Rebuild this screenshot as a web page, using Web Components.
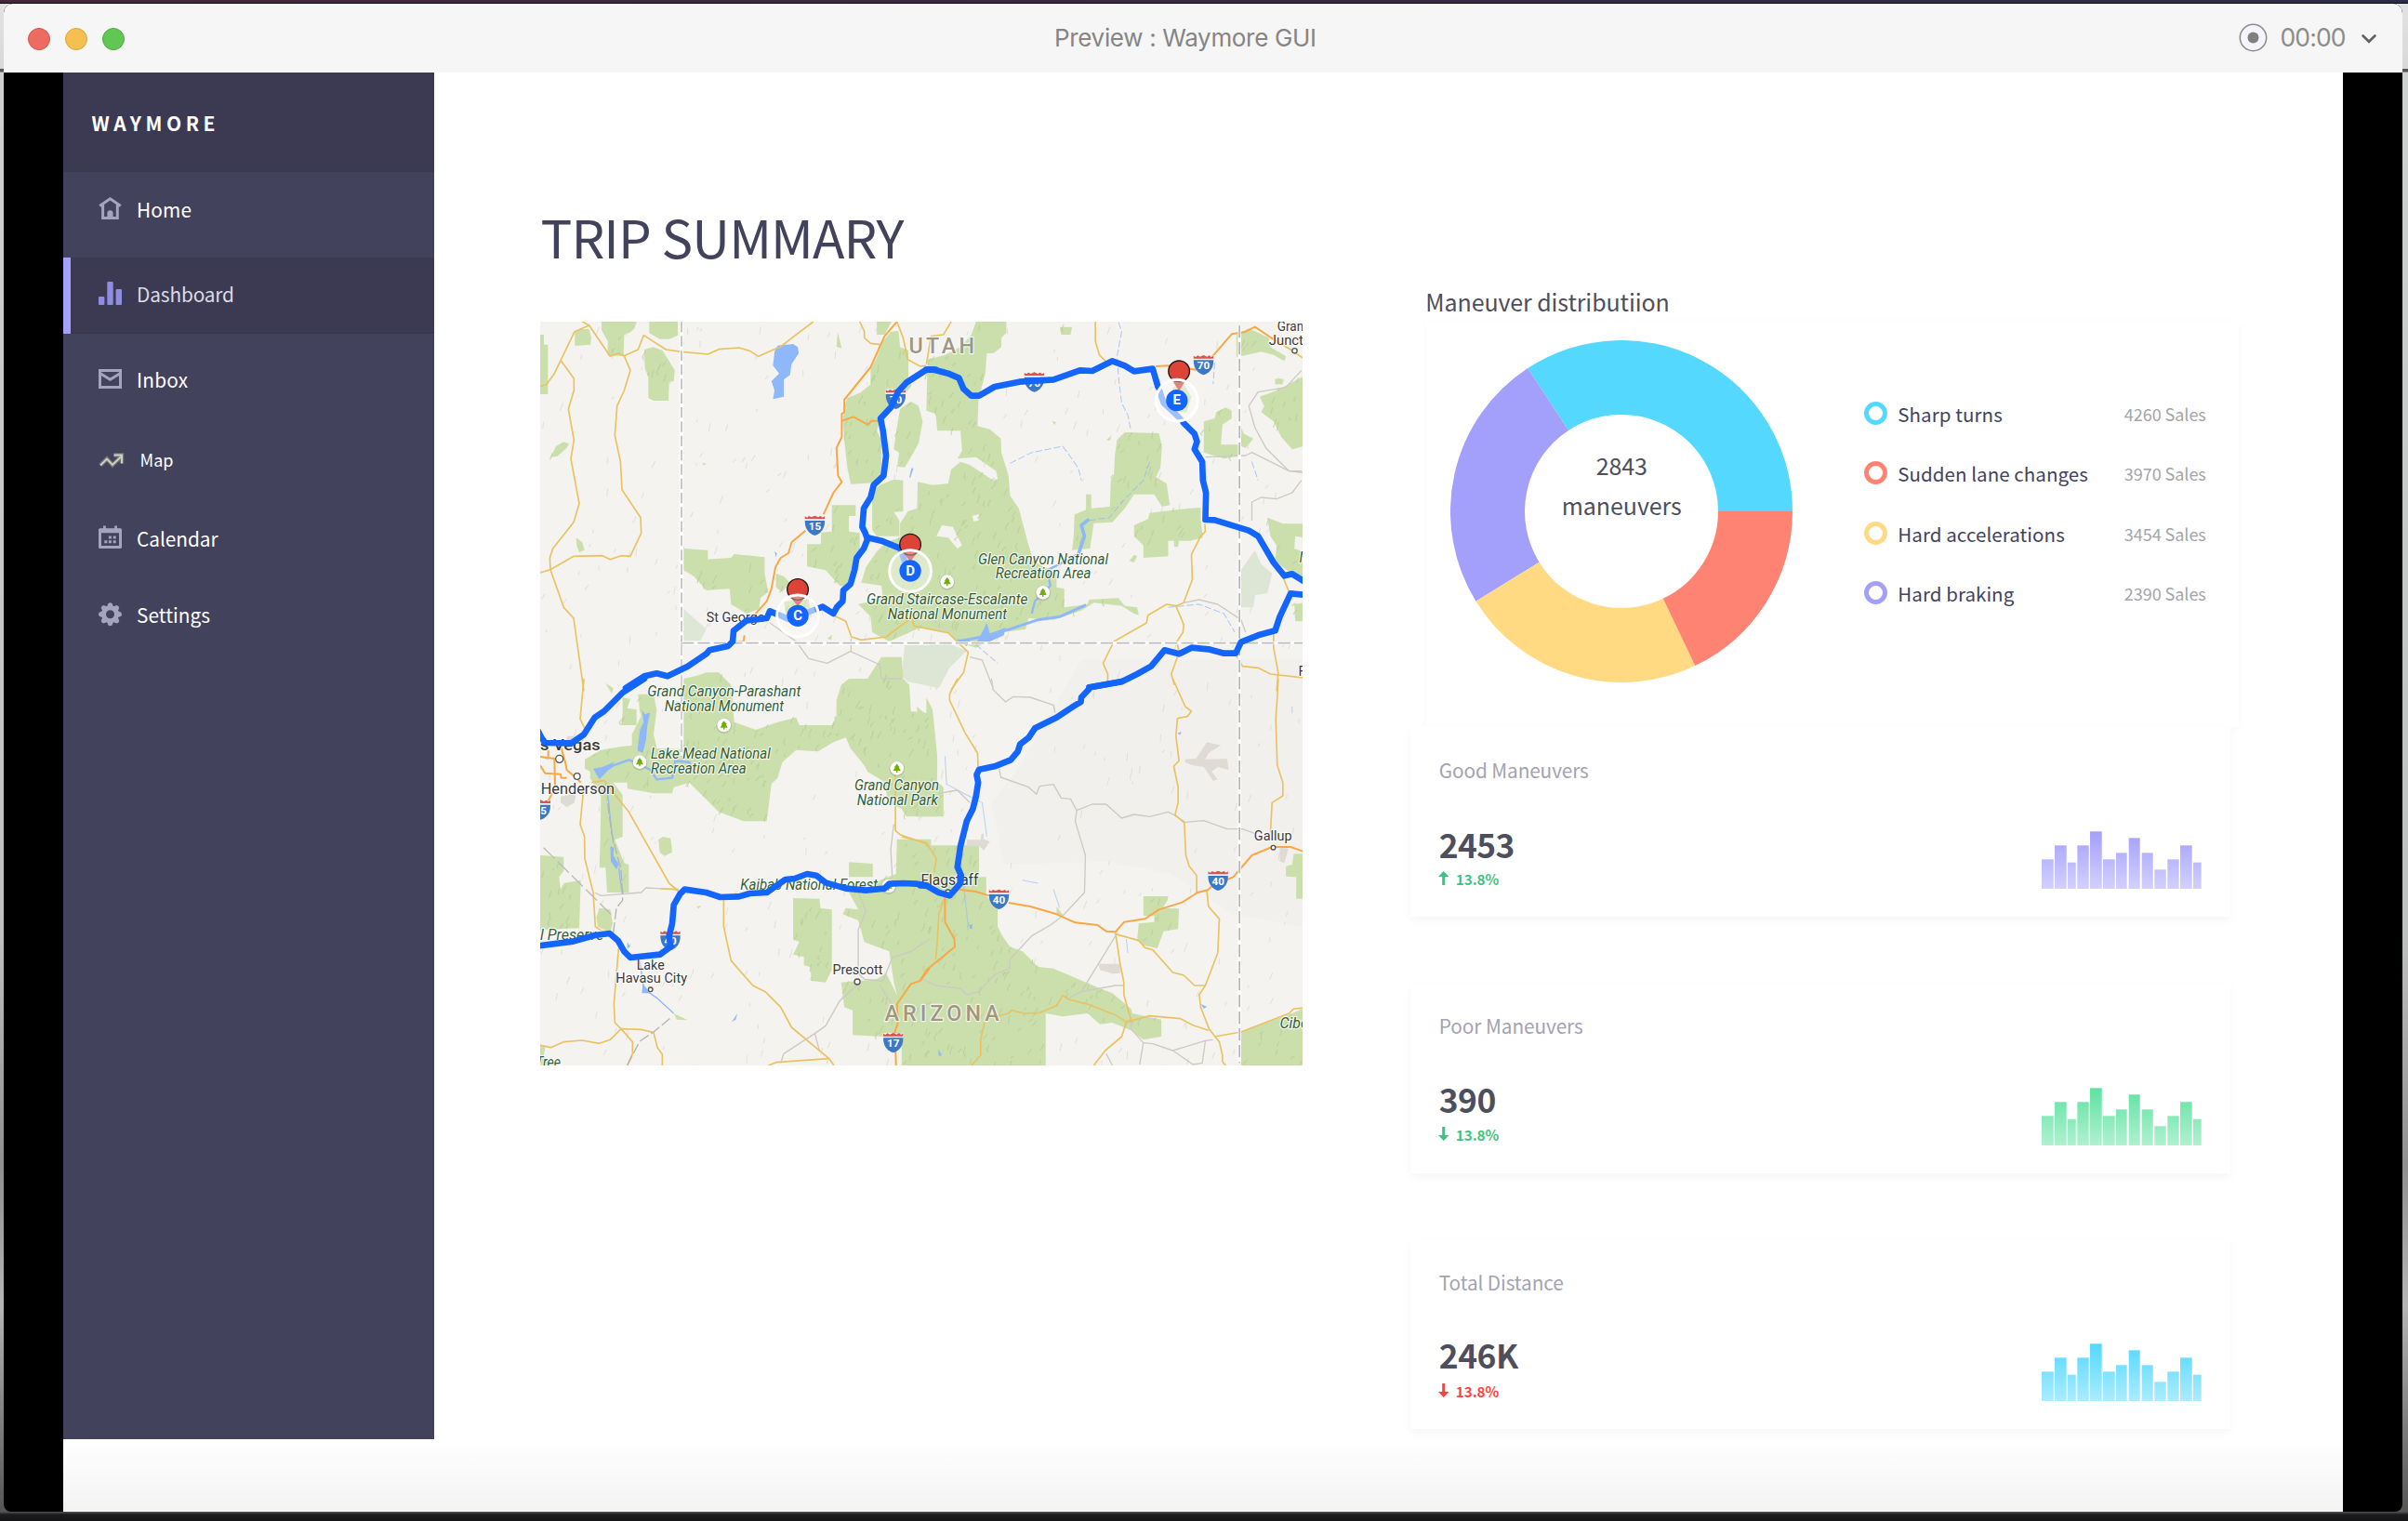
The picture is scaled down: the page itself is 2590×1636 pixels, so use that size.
<!DOCTYPE html>
<html lang="en">
<head>
<meta charset="utf-8">
<title>Waymore GUI</title>
<style>
html,body{margin:0;padding:0;width:2590px;height:1636px;overflow:hidden;background:#17161a}
body{font-family:"Noto Sans CJK SC","Source Sans Pro","Open Sans",sans-serif}
</style>
</head>
<body>
<way-desktop></way-desktop>
<script>
const define=(name,html,init)=>customElements.define(name,class extends HTMLElement{
  connectedCallback(){
    if(this.shadowRoot)return;
    const root=this.attachShadow({mode:'open'});
    root.innerHTML=typeof html==='function'?html(this):html;
    if(init)init(this,root);
  }
});
const a=(el,n,d='')=>el.getAttribute(n)??d;

/* Single-line label whose tracking is set so that the line is "w" pixels wide. */
define('way-text',el=>`<style>
:host{display:block;white-space:nowrap;font-size:${a(el,'size',20)}px;line-height:30px;height:30px;color:${a(el,'color','#43425d')};font-weight:${a(el,'weight',400)}}
span{display:inline-block;line-height:30px;white-space:nowrap}
</style><span>${el.getAttribute('text')}</span>`,(el,root)=>{
  const w=+a(el,'w',0),s=root.querySelector('span');
  if(w){const n=el.getAttribute('text').length-1;
    const d=(w-s.getBoundingClientRect().width)/n;
    s.style.letterSpacing=d.toFixed(3)+'px';s.style.marginRight=(-d).toFixed(3)+'px';}
});

define('way-titlebar',`<style>
:host{display:flex;height:74px;background:#f6f6f6;border-radius:10px 10px 0 0;align-items:flex-start;justify-content:space-between;font-family:Inter,"Liberation Sans",sans-serif;box-shadow:inset 0 1px 0 #fff}
.side{display:flex;width:360px}
.lights{display:flex;gap:16px;padding:26px 0 0 26px}
.lights i{display:block;box-sizing:border-box;width:24px;height:24px;border-radius:50%}
.t{padding-top:21.5px;margin-left:2px}
.side.rec{justify-content:flex-end;width:400px}
.rec svg{display:block}
.rec way-text{margin:21px 16px 0 14px}
</style>
<div class="side"><div class="lights"><i style="background:#ed6b60;border:1px solid #d8544b"></i><i style="background:#f5c04f;border:1px solid #d9a33e"></i><i style="background:#62c655;border:1px solid #4eaa41"></i></div></div>
<div class="t"><way-text text="Preview : Waymore GUI" size="26" w="282" color="#858585"></way-text></div>
<div class="side rec">
<svg width="31" height="31" viewBox="0 0 31 31" style="margin-top:20.5px"><circle cx="15.5" cy="15.5" r="14.2" fill="#f5f4fa" stroke="#8c8c8c" stroke-width="1.6"/><circle cx="15.5" cy="15.5" r="6" fill="#7f7f7f"/></svg>
<way-text text="00:00" size="26.5" w="71" color="#8c8c8c"></way-text>
<svg width="16" height="10" viewBox="0 0 16 10" style="margin:33px 28.5px 0 0"><path d="M1.6 1.5 8 7.8 14.4 1.5" fill="none" stroke="#636363" stroke-width="2.7" stroke-linecap="round"/></svg>
</div>`);

const ICONS={
home:`<path d="M1.2 9.4 12.5 1.7 23.8 9.4M4.6 7.5V22.4H20.3V7.5" fill="none" stroke="#a5a4bf" stroke-width="3" stroke-linejoin="miter"/><path d="M9.4 24V17.3a3.1 3.1 0 0 1 6.2 0V24z" fill="#a5a4bf"/>`,
bars:`<g fill="#8f8ddf"><rect x="0" y="16" width="6.4" height="9" rx="1"/><rect x="9.3" y="0" width="6.4" height="25" rx="1"/><rect x="18.6" y="8" width="6.4" height="17" rx="1"/></g>`,
inbox:`<g transform="translate(0 2)"><path d="M1.5 1.5h22v18h-22zM2 4.7 12.5 11.2 23 4.7" fill="none" stroke="#a5a4bf" stroke-width="3"/></g>`,
map:`<g fill="none" transform="translate(1 6.5)"><path d="M1 13 8 6l6 6.5L24 3M15.5 2H24v9" stroke="#77756f" stroke-width="4.4"/><path d="M1 13 8 6l6 6.5L24 3M15.5 2H24v9" stroke="#cfcecb" stroke-width="1.9"/></g>`,
cal:`<g transform="translate(0 -.7)"><path d="M1.5 4.5h22v18.7h-22z" fill="none" stroke="#a5a4bf" stroke-width="3" stroke-linejoin="round"/><path d="M1 3.5h23v4.4H1zM5 .3h2.8v4H5zM17.2.3H20v4h-2.8zM10.9 11.3h3v3h-3zM15.7 11.3h3v3h-3zM6.3 16h3v3h-3zM10.9 16h3v3h-3zM15.7 16h3v3h-3z" fill="#a5a4bf"/></g>`,
gear:`<g transform="translate(12.5 12.7)"><g fill="#a5a4bf">${[0,45,90,135,180,225,270,315].map(r=>`<path transform="rotate(${r})" d="M-3.6-8-2-11.8Q0-13.2 2-11.8L3.6-8z"/>`).join('')}</g><circle r="6.9" fill="none" stroke="#a5a4bf" stroke-width="4.8"/></g>`
};
define('way-nav-item',el=>`<style>
:host{display:flex;align-items:flex-start;box-sizing:border-box;height:${a(el,'h')}px;padding:${a(el,'pt','25')}px 0 0 38px}
:host([active]){background:#3c3a52;border-left:8px solid #a3a1fb;padding-left:30px;margin-bottom:9px;box-shadow:inset 0 -1px #373550}
svg{display:block;overflow:visible;margin-top:2px;flex:none}
way-text{margin:-.5px 0 0 ${a(el,'gap','16')}px}
</style><svg width="25" height="25" viewBox="0 0 25 25">${ICONS[a(el,'icon')]}</svg><way-text text="${a(el,'label')}" size="${a(el,'size','20.8')}" w="${a(el,'w')}" color="${a(el,'color','#fff')}"></way-text>`);

define('way-sidebar',`<style>
:host{display:flex;flex-direction:column;width:398.7px;height:1470px;background:#43425d;flex:none}
header{height:107px;background:#3c3a52;box-sizing:border-box;padding:39px 0 0 30.5px}
</style>
<header><way-text text="WAYMORE" size="21" weight="700" w="133" color="#fff"></way-text></header>
<way-nav-item icon="home" label="Home" h="92" w="59"></way-nav-item>
<way-nav-item active icon="bars" label="Dashboard" h="82" pt="24" w="105" color="#dddce2"></way-nav-item>
<way-nav-item icon="inbox" label="Inbox" h="86" w="55"></way-nav-item>
<way-nav-item icon="map" label="Map" h="85" size="18" gap="19.5" w="36"></way-nav-item>
<way-nav-item icon="cal" label="Calendar" h="82" w="87.5"></way-nav-item>
<way-nav-item icon="gear" label="Settings" h="82" w="79"></way-nav-item>`);

/* ---------- map ---------- */
const P=(d,f='#cbdfac')=>d.split('|').map(p=>`<polygon points="${p.trim()}" fill="${f}"/>`).join('');
const L=(d,c,w,x='')=>d.split('|').map(p=>`<polyline points="${p.trim()}" stroke="${c}" stroke-width="${w}" fill="none" stroke-linejoin="round" ${x}/>`).join('');
const Y='#e9c262',O='#f8a845',G='#cdc9c3',W='#8fb8fb',B='#1365fe';
const Q=[[0,0],[1290,0],[0,1200],[1290,1200]].map(q=>s=>`<g transform="translate(${q})">${s}</g>`);
const parks=
Q[0](P(`64,90 76,90 76,122 89,122 89,282 64,282|176,78 195,72 222,72 229,100 226,122 176,126|262,48 376,48 368,70 355,82 335,90 333,158 282,158 282,110 262,75|416,48 508,48 508,92 480,104 450,104 416,85|400,138 428,130 458,140 478,172 498,205 495,240 480,242 478,303 430,303 413,295 413,225 402,200|98,485 115,450 140,436 157,442 150,455 120,482|1150,48 1198,48 1175,90 1150,90|1020,128 1024,82 1037,134|1170,110 1195,80 1220,78 1225,130 1252,140 1252,230 1262,255 1200,330 1160,370 1150,400 1165,430 1165,540 1140,568 1066,572 1055,520 1045,430 1040,370 1045,330 1055,295 1100,275 1130,250 1130,200 1150,165|1213,400 1225,330 1260,305 1285,320 1298,370 1285,440 1260,485 1240,518 1216,515 1222,470 1205,460|1135,600 1160,575 1205,557 1235,560 1235,660 1205,662 1223,690 1223,740 1150,740 1135,720|1005,640 1082,640 1082,675 1060,675 1060,725 1095,730 1095,780 1075,830 1060,905 1030,900 985,850 925,838 925,766 970,766 970,728 1005,725|527,780 605,785 605,815 680,810 690,798 788,808 788,860 800,920 775,940 770,975 730,990 680,960 675,910 600,915 560,870 527,850|825,860 850,870 870,890 845,920 825,905|180,745 200,760 207,785 190,792 182,770|850,950 930,945 940,1000 860,1010|585,503 600,506 593,512|990,1070 1005,1058 1003,1076`))+
Q[1](P(`180,48 278,48 278,85 262,100 262,130 236,150 215,150 210,215 188,300 185,385 225,395 260,425 262,470 285,545 290,610 318,650 350,770 365,820 440,860 440,905 465,910 465,970 540,960 545,945 640,940 660,965 700,970 705,995 690,990 650,965 560,955 520,980 430,1010 350,1005 340,1040 270,1050 180,1100 120,1080 90,1050 0,1035 -100,1080 -155,1050 -160,1000 -200,960 -120,940 -125,900 -190,890 -175,840 -140,790 -110,760 -65,745 -65,700 -40,660 -10,650 -8,565 40,575 90,570 100,525 130,500 160,510 235,560 250,555 245,530 180,485 120,490 135,465 130,400 55,400 50,345 20,335 22,250 24,170 80,155 130,130 165,90|450,65 490,65 485,90 455,90|635,430 660,405 770,408 780,450 775,520 760,550 795,570 805,640 780,645 755,605 690,605 660,650 620,695 560,698 548,780 520,782 490,785 495,740 498,670 535,655 535,605 552,605 552,650 612,645 615,560 625,540 628,480|915,370 950,360 955,340 985,325 1005,335 1005,360 975,380 970,445 1030,445 1030,480 980,490 915,470|1035,390 1045,410 1075,425 1050,455 1035,450|690,705 735,685 740,665 870,650 905,648 905,690 912,745 870,755 835,755 832,775 820,775 818,755 800,755 800,805 720,810 720,770 690,740|675,820 690,800 700,805 690,825|1020,90 1060,70 1125,100 1130,130 1180,160 1175,175 1140,155 1100,145 1020,163|1145,232 1170,232 1170,250 1145,250|1095,290 1150,270 1235,225 1235,450 1200,460 1165,420 1140,370 1100,340 1110,320|1120,680 1170,700 1235,700 1235,745 1210,740 1207,780 1235,790 1235,870 1190,855 1145,820 1150,770 1130,740|1207,960 1235,955 1235,1015 1210,1015|600,430 618,415 612,432|425,368 438,372 434,382|815,260 850,250 875,290 860,340 820,340`))+
Q[2](P(`1120,0 1165,-70 1230,-70 1235,0 1255,20 1260,105 1310,110 1310,60 1330,100 1345,250 1345,445 1245,445 1230,420 1190,400 1170,330 1120,300 1110,280 1065,225 1050,190 1010,205 960,235 890,230 845,270 830,320 810,340 795,460 720,460 640,430 610,400 545,335 495,350 490,370 430,370 345,355 345,335 300,335 330,375 330,510 305,520 335,595 350,600 350,690 280,690 275,610 255,610 258,520 260,380 225,320 225,300 208,290 208,260 260,230 320,220 360,215 360,180 390,120 385,105 380,50 430,50 440,100 430,180 440,225 527,228 527,0 570,-10 600,-20 640,-20 680,20 690,140 760,165 830,140 890,125 900,150 1005,150 1020,120 1020,70 1035,20 1060,0|325,150 330,110 330,60 355,65 345,95 375,100 375,150|275,15 300,30 295,48|64,570 140,575 140,620 125,640 130,680 140,660 195,650 190,805 64,810|255,740 290,745 298,790 290,820 250,800 245,770|445,520 460,510 485,515 490,560 465,572 450,560|880,708 965,710 968,740 1005,745 1005,940 985,980 940,975 935,930 915,925 915,898 880,890 900,850 880,840|64,1180 80,1190 75,1220 110,1248 64,1248|495,1080 540,1102 505,1100|568,735 585,732 575,742`))+
Q[3](P(`-75,518 35,518 35,538 190,538 190,640 213,640 213,700 250,745 250,800 265,830 290,865 330,880 380,930 430,935 500,965 570,995 620,1015 680,1065 685,1080 778,1100 778,1155 720,1165 680,1135 620,1110 580,1115 540,1080 460,1090 405,1080 405,1248 -60,1248 -60,1160 -120,1155 -218,1150 -218,1070 -245,1060 -255,980 -140,970 -110,950 -75,1020 -85,980 -100,880 -180,850 -200,780 -250,760 -240,740 -200,745 -230,690 -78,630|-230,592 -153,597 -153,640 -230,640|720,702 800,702 798,715 782,740 835,742 832,808 785,815 765,870 720,860 700,840 705,790 755,785 755,765 720,765|1180,605 1200,600 1205,565 1235,565 1235,710 1213,710 1213,640 1180,638|1035,1140 1200,1080 1235,1065 1235,1248 1035,1248|440,735 462,765 440,760|0,100 25,120 20,200 50,240 50,330 75,350 75,445 -10,445 -10,90`));
/* relief strokes scattered over the terrain */
let seed=7;const rnd=()=>(seed=(seed*16807)%2147483647)/2147483647;
let relief='',relief2='';
for(let i=0;i<2600;i++){const x=64+rnd()*2460|0,y=48+rnd()*2400|0,l=6+rnd()*14|0,k=rnd()*10-12|0;relief+=`M${x} ${y}l${k} ${l}l${rnd()*12-6|0} ${l/2|0}`;}
for(let i=0;i<520;i++){const x=64+rnd()*2460|0,y=48+rnd()*2400|0,l=8+rnd()*20|0;relief2+=`M${x} ${y}l${-(rnd()*12|0)} ${l}`;}
const shield=(x,y,t)=>`<g transform="translate(${x} ${y})"><path d="M-34-16V-30Q-20-34 0-30T34-30V-16z" fill="#f4f2ee"/><path d="M-32-20v-9l7 4 6-5 8 4 11-5 11 5 8-4 6 5 7-4v9z" fill="#d9534f"/><path d="M-32-15H32Q33 10 17 24 8 31 0 33-8 31-17 24-33 10-32-15z" fill="#3b78c5"/><text y="15" font-size="35" font-weight="700" fill="#fff" text-anchor="middle">${t}</text></g>`;
const tree=(x,y)=>`<g transform="translate(${x} ${y})"><circle r="25" fill="#8a8a80" opacity=".35" cy="2"/><circle r="22" fill="#fff"/><path d="M0-14 9-3H6L12 8H2v6h-4V8h-10l6-11h-3z" fill="#71ad0b"/></g>`;
const town=(x,y,r=9)=>`<circle cx="${x}" cy="${y}" r="${r}" fill="#fff" stroke="#555" stroke-width="4"/>`;
const T=(x,y,t,w,s=45,c='#3a3a3a',e='')=>`<text x="${x}" y="${y-2}" textLength="${w}" lengthAdjust="spacingAndGlyphs" font-size="${s}" fill="${c}" ${e}>${t}</text>`;
const I=(x,y,t,w,s=47)=>T(x,y,t,w,s,'#336039','font-style="italic"');
const pin=(x,y,px,py,t)=>`<g><path d="M${px-26} ${py+22}L${px} ${y-30}L${px+26} ${py+22}z" fill="#cf4034"/><circle cx="${px}" cy="${py}" r="34" fill="#db4437" stroke="#231815" stroke-width="4"/><circle cx="${x}" cy="${y}" r="67" fill="#fff" fill-opacity=".36" stroke="#fff" stroke-width="9"/><circle cx="${x}" cy="${y}" r="35" fill="${B}"/><text x="${x}" y="${y+14}" font-size="45" font-weight="700" fill="#fff" text-anchor="middle">${t}</text></g>`;
const RT='stroke-linecap="round"';
const mapSvg=`<svg width="820.5" height="800" viewBox="64 48 2461 2400" preserveAspectRatio="none" font-family="Roboto,'Liberation Sans',sans-serif">
<rect x="64" y="48" width="2461" height="2400" fill="#f4f3ef"/>
<path d="M1810 1140H2524V2000L2300 1960 2100 1830 1900 1790 1560 1800 1520 1600 1600 1500z" fill="#f2f0ec"/>
<path d="${relief2}" stroke="#dddbd6" stroke-width="3" fill="none" opacity=".8"/>
${Q[0](P('527,975 600,1040 580,1078 527,1078','#dde7d5'))}
${Q[1](P('1035,850 1080,785 1100,830 1135,860 1120,925 1080,930 1075,970 1035,970|-50,1090 100,1090 150,1110 95,1165 60,1230 -40,1210 -60,1190','#dde5d4'))}
${parks}
${Q[1](P('52,740 70,705 105,710 135,770 120,780 90,745|168,675 190,670 188,690 172,692','#f4f3ef'))}
<g id="relief"></g>
${Q[3](P('150,520 195,520 198,500 205,500 205,518 225,525 205,555 190,540 150,540|855,260 890,258 925,205 970,215 930,240 920,260 990,258 995,295 960,285 940,300 960,325 945,330 915,285 880,280 855,270|575,920 645,920 645,950 620,952 580,940|1160,545 1188,548 1175,595 1160,590','#dfdad4'))}
${Q[2](P('150,185 205,185 200,215 150,215|130,380 180,370 175,400 150,415 130,400','#dcdcd2'))}
${Q[0](P('830,125 880,120 895,130 898,150 875,185 870,220 850,235 850,290 815,298 820,270 810,240 835,215 815,190 820,145|1255,550 1262,520 1268,522 1258,552|820,790 828,795 825,808',W))}
${Q[1](L('640,50 650,80 635,160 640,230 650,310 670,350 680,400|290,505 360,470 460,450 510,520 520,560|740,500 720,560 660,620 610,680 540,690|950,180 945,250|1070,500 1090,560|800,970 900,960 980,990 1015,1050|180,1090 250,1150',W,3,'stroke-dasharray="22 8" opacity=".75"')+L('545,685 520,705 530,740 510,800 490,810',W,11)+L('470,820 410,850 420,900 370,950 360,990',W,7)+L('120,1080 200,1065 290,1040 380,1010 450,1000 535,962',W,9)+P('195,1060 215,1020 225,1055 275,1035 270,1060 225,1080 180,1085|118,1072 160,1078 150,1095',W))}
${Q[2](P('392,100 402,115 418,110 410,150 405,200 395,240 378,232 385,170 398,140|235,290 265,285 305,268 270,310 255,325|290,540 302,545 300,570 318,600 310,615 292,590|395,985 420,1015 392,1015|682,1108 700,1080 695,1100|345,850 355,865 345,870',W)+L('270,300 300,280 350,262 385,275 420,295 440,325 490,320 500,265 545,270 560,300',W,7)+L('275,330 285,400 292,470 300,530|318,610 322,650 332,695|385,910 398,1000 440,1030 495,1080',W,4))}
${Q[3](L('130,580 155,800|80,250 85,340 150,375 200,400 215,510|330,650 380,660|430,680 450,740|665,840 670,885|1200,90 1200,112',W,3,'opacity=".6"')+P('158,795 168,792 168,808 160,806|905,1050 925,1058 915,1065|58,1195 70,1215 60,1218|830,175 843,172 838,182',W))}
${Q[0](L('890,1080 930,1135 990,1150 1065,1112 1160,1155 1165,1200 1230,1200|1067,1070 1067,1112|805,1020 890,1080',G,4))}
${Q[1](L('920,485 1050,480 1070,470 1190,530 1230,530|1230,205 1180,260 1090,275 1060,320 1080,390 1115,455 1190,530 1235,535|1070,690 1070,630 1100,615 1150,620 1200,600 1230,560|850,955 900,945 960,960 1035,1010 1050,1050|160,1130 200,1140 235,1230',G,4))}
${Q[2](L('240,690 260,700 390,690 405,675 500,680|64,250 90,260|1205,470 1195,550 1200,640|1090,690 1115,750 1090,810 1090,950 1110,970|1090,985 1030,1040 985,1120 950,1145 850,1210 840,1240|950,1145 965,1200|1110,970 1170,975 1200,900 1260,880 1320,840|1160,990 1200,1050',G,4))}
${Q[3](L('230,0 235,35 275,75 300,58 355,60 430,85 435,110|255,290 260,318 350,350 375,373 385,347 430,341 455,385 485,388 505,425 555,405 600,405 650,450 690,438 740,445 800,430 820,440 855,463 915,458 990,485 1040,485 1080,500|505,425 500,460 533,570 530,690 460,765 420,795 360,830 290,905 288,935 240,955 190,1010 150,1020 130,1000 50,990 0,965|630,830 520,1010 480,1030|520,1010 630,990 655,990|680,1100 680,1130 720,1175 750,1178 815,1200 920,1168 945,1165|720,1175 708,1245|815,1200 880,1245 910,1240 920,1168|600,1210 620,1248|60,370 120,360 160,400',G,4))}
${Q[0](L('64,258 85,250 110,215 175,80 222,60 290,160 315,150 335,158 380,138 398,92 470,138 520,145 605,153 640,137 705,132 740,142 768,160 840,128 945,48|200,48 222,60|132,175 173,232 173,270 155,330 173,430 163,490 190,635 172,695 105,780 95,810 97,848 140,970 172,1005 205,1240|335,158 355,205 335,270 312,320 305,415 323,500 328,590 388,680 390,730 355,805 325,803 290,815 265,803 172,805 97,848 64,858|1095,48 1110,80 1110,100 1130,118 1163,122|1215,48 1235,100 1250,170 1290,192 1310,190|1010,995 1050,1015 1068,1065 1100,1075 1180,1065 1260,1005',Y,5))}
${Q[1](L('100,48 75,90 35,95 20,185|565,48 565,110 578,155 600,178|918,700 920,725 905,740 875,800 878,880 850,955 825,965 795,960 735,995 730,1020 625,1080 590,1150 605,1185 605,1215|825,965 850,1025 848,1050 828,1080 835,1115 810,1185 820,1220|1165,860 1190,920|1140,1050 1140,1100 1155,1180 1150,1240|1020,1125 1040,1160 1090,1165 1130,1185 1235,1197|-25,1005 -20,1030 90,1052 155,1115 140,1180 100,1235|1130,100 1190,135 1235,165',Y,5))}
${Q[2](L('205,0 193,130 210,165|205,345 193,470 207,510 208,580 235,690 242,800 285,830|230,335 270,328 310,380 350,430 480,660 515,690|453,678 510,680|656,715 656,800 680,910 750,990 790,1010 840,1060 875,1125 995,1225 1012,1248|800,1248 825,1238 995,1226|317,870 302,1050 305,1110 325,1130 290,1165 255,1177 200,1167 140,1172 98,1190 64,1183|325,1130 362,1172 362,1210 345,1248|325,1130 390,1132 430,1142 442,1190 458,1212 458,1248|1210,310 1210,490 1225,503 1305,530 1320,545',Y,5))}
${Q[3](L('120,0 95,50 95,70 145,175 185,240 187,290|-60,510 20,530 52,580 45,625|80,705 60,760 55,850 50,905|815,0 855,90 875,105 862,122 830,128 825,185 835,265 818,282 832,350 832,400 822,440 852,465 857,570 868,605 892,635 892,690|1155,0 1152,60 1147,130 1152,280 1170,335 1170,378 1135,400 1130,500|925,685 930,735 965,775 960,885 920,990 900,1020 905,1060 932,1130 965,1172 975,1215 975,1235 985,1248|630,820 645,920 657,980 657,1020 680,1100 665,1110 650,1155 597,1200 560,1248|630,824 705,845 725,868 750,875 815,948 850,957 885,990 920,990|165,1248 195,1215 195,1165 210,1100 285,1080 295,1070 335,1080 385,1078 440,1055 460,1022 480,1035 545,1052 630,1085 665,1108 740,1088 840,1097 880,1118 930,1135|950,1155 1035,1140 1190,1080 1205,1065 1235,1063',Y,5))}
${Q[0](L('1215,48 1175,95 1130,195 1045,300 1045,340 1037,345 1037,420 1020,455 1025,545 1037,565 1010,600 978,670|920,722 875,760 865,795 840,810 823,840 810,910 795,950 755,995|1037,368 1075,355 1120,380 1135,368 1165,368|690,1083 720,1080 723,1060',O,6))}
${Q[1](L('760,192 800,190 890,203|940,163 1005,88 1045,82 1080,65 1140,105',O,6))}
${Q[2](L('64,252 110,258 112,350 90,395|130,215 145,270 150,295 180,320 195,335|64,280 80,305 130,308 132,320 150,320|90,230 90,255|1212,1248 1210,1190 1205,1150 1218,1110 1215,1050 1260,985 1290,975 1320,935',O,6))}
${Q[3](L('125,680 180,687 222,700|285,723 355,735 440,760 500,787 572,795 600,815 630,817 658,785 725,775 770,745 845,722 895,690 928,682 945,665|990,648 1010,640 1070,570 1135,543 1195,543 1235,557|80,700 80,785 110,840 112,865 20,940 0,975',O,6))}
${Q[0](L('520,48 520,1085 1320,1085','#fff',12)+L('520,48 520,1085','#bdbdbd',5,'stroke-dasharray="34 12"')+L('520,1085 2525,1085','#fff',10)+L('520,1085 2525,1085','#bbb',5,'stroke-dasharray="40 12"')+L('520,1085 520,1460','#fff',8)+L('520,1085 520,1460','#bbb',4,'stroke-dasharray="40 12"')+L('2320,60 2320,2440','#fff',10)+L('2320,60 2320,2440','#b5b5b5',5,'stroke-dasharray="40 14"'))}
${Q[2](L('75,545 300,768','#bbb',4,'stroke-dasharray="50 14"')+L('300,820 310,740 330,715 325,620 295,500 280,390|345,1248 385,1170 430,1140 490,1090','#b4b4b4',4,'stroke-dasharray="34 10"'))}
${Q[0](shield(950,705,15)+shield(1211,297,70))}${Q[1](shield(368,242,70)+shield(914,187,70))}
${Q[2](shield(65,422,15)+shield(484,844,40)+shield(1203,1174,17))}${Q[3](shield(254,711,40)+shield(961,651,40))}
${Q[1](tree(87,887)+tree(396,922))}${Q[2](tree(657,150)+tree(385,269)+tree(1215,289)+tree(1188,669))}
${Q[2](town(126,259,12)+town(183,315,10)+town(1087,978)+town(420,1003,7))}${Q[3](town(1139,545,7)+town(90,690,9))}${Q[1](town(1208,142,8))}
<g stroke="#fff" stroke-opacity=".75" stroke-width="7" stroke-linejoin="round" style="paint-order:stroke">
${T(1253,152,'UTAH',224,70,'#a09682','font-weight="500" letter-spacing="12"').replace('lengthAdjust="spacingAndGlyphs"','')}
${T(1175,2306,'ARIZONA',382,70,'#a09682','font-weight="500" letter-spacing="12"').replace('lengthAdjust="spacingAndGlyphs"','')}
${T(600,1020,'St George',188,43)}
${I(1117,963,'Grand Staircase-Escalante',520)}${I(1185,1010,'National Monument',385)}
${I(1477,832,'Glen Canyon National',420)}${I(1533,879,'Recreation Area',308)}
${I(410,1258,'Grand Canyon-Parashant',495)}${I(465,1306,'National Monument',385)}
${I(421,1460,'Lake Mead National',386)}${I(421,1507,'Recreation Area',308)}
${I(1078,1563,'Grand Canyon',273)}${I(1086,1610,'National Park',261)}
${I(710,1882,'Kaibab National Forest',443)}${I(64,2045,'l Preserve',205)}${I(50,2456,'Tree',80)}
${T(2442,80,'Gran',85,45)}${T(2415,124,'Juncti',122,45)}${I(2513,828,'N',30)}${T(2510,1192,'F',24,46)}${I(2450,2330,'Cibola',130)}
${T(64,1433,'s Vegas',194,52,'#3a3a3a','font-weight="500"')}${T(66,1573,'Henderson',238,50)}
${T(375,2140,'Lake',90)}${T(308,2184,'Havasu City',230)}${T(1007,2156,'Prescott',162)}${T(1292,1868,'Flagstaff',186,47)}${T(2367,1725,'Gallup',122)}
</g>
<g>
${Q[0](L('830,992 865,1008 930,985 955,975|1225,778 1243,830','#6a9dfb',19,RT)+L('340,1230 400,1192 440,1183 475,1192 540,1160 600,1120 610,1108 670,1095 685,1080 688,1045 730,1012 795,1005 805,982 826,991|958,975 975,968 1010,990 1022,968 1040,950 1042,915 1065,895 1078,850 1085,810 1108,780 1120,750 1112,728 1103,710 1108,650 1130,615 1140,575 1172,545 1180,480 1170,400 1162,360 1195,325 1220,272 1245,245 1310,203 1340,203|1120,745 1165,755 1222,778',B,20,RT))}
${Q[1](L('768,258 785,310 830,352 848,372','#6a9dfb',19,RT)+L('20,203 45,203 90,215 125,230 140,265 165,287 190,287 240,258 320,242 430,235 515,205 555,207 620,175 660,190 690,208 750,200 767,258|850,375 885,410 893,435 885,460 910,500 912,560 922,600 920,687 950,688 1060,722 1090,740 1140,825 1175,868 1200,862 1245,890|1245,930 1195,925 1160,1000 1145,1045 1090,1060 1035,1082 1018,1118 980,1118 930,1105 875,1100 835,1120 788,1108 745,1160 700,1185 650,1210 545,1228',B,20,RT))}
${Q[2](L('55,165 68,190 80,207 165,208 205,180 240,125 270,105 330,45 400,0|1310,667 1280,662 1235,660 1190,662 1175,677 1115,683 1050,677 985,658 955,635 925,630 885,645 855,648 795,690 740,693 705,703 645,705 600,690 530,680 515,695 495,730 490,790 480,830 485,865 450,890 355,900 335,880 315,845 288,822 240,828 170,848 50,863',B,20,RT))}
${Q[3](L('650,9 550,28 520,60 518,75 490,92 440,125 370,160 350,190 322,212 315,235 292,262 240,283 190,293 182,310 187,335 180,380 170,420 150,460 130,540 120,608 132,635 130,660 95,700 60,690 20,668 0,667',B,20,RT))}
${pin(895,997,895,912,'C')}${pin(1258,852,1258,767,'D')}${pin(2118,302,2125,208,'E')}
</g></svg>`;
define('way-map',`<style>:host{display:block;width:820.5px;height:800px;overflow:hidden}svg{display:block}</style>${mapSvg}`,(el,root)=>{
  /* keep only relief strokes that start inside a park polygon */
  const polys=[...root.querySelectorAll('polygon[fill="#cbdfac"]')].map(p=>{
    const m=/translate\((\d+),(\d+)\)/.exec(p.parentNode.getAttribute('transform'));
    return p.getAttribute('points').trim().split(/\s+/).map(s=>{const c=s.split(',');return[+c[0]+ +m[1],+c[1]+ +m[2]]});
  });
  const inside=(x,y)=>polys.some(g=>{let r=false;for(let i=0,j=g.length-1;i<g.length;j=i++){const[a,b]=g[i],[c,d]=g[j];if((b>y)!==(d>y)&&x<(c-a)*(y-b)/(d-b)+a)r=!r}return r});
  const d=relief.split('M').filter(s=>{const m=/^(\d+) (\d+)/.exec(s);return m&&inside(+m[1],+m[2]+8)}).map(s=>'M'+s).join('');
  root.querySelector('#relief').innerHTML=`<path d="${d}" fill="none" stroke="#b4cb95" stroke-width="3.5" opacity=".65"/>`;
});

/* ---------- donut ---------- */
const arc=(s,e,c)=>{const f=t=>[184+144*Math.cos(t*Math.PI/180),184-144*Math.sin(t*Math.PI/180)].map(v=>v.toFixed(2)).join(' ');return `<path d="M${f(s)}A144 144 0 ${e-s>180?1:0} 0 ${f(e)}" fill="none" stroke="${c}" stroke-width="80"/>`};
define('way-donut',`<style>
:host{display:grid;width:368px;height:368px}
svg,.c{grid-area:1/1}
.c{display:flex;flex-direction:column;align-items:center;padding-top:119px;gap:13px}
</style><svg width="368" height="368">${arc(0,123.2,'#55d8fe')+arc(123.2,211.7,'#a3a0fb')+arc(211.7,295.5,'#ffda83')+arc(295.5,360,'#ff8373')}</svg>
<div class="c"><way-text text="2843" size="25" w="55" color="#4d4f5c"></way-text><way-text text="maneuvers" size="25" w="129" color="#4d4f5c"></way-text></div>`);
define('way-legend-row',el=>`<style>
:host{display:flex;align-items:center;height:30px}
i{display:block;box-sizing:border-box;width:25px;height:25px;border-radius:50%;border:5px solid ${a(el,'c')};margin-right:11px;margin-top:-2px}
way-text{margin-top:-1px}
.v{margin-left:auto}
</style><i></i><way-text text="${a(el,'label')}" size="20.5" w="${a(el,'w')}"></way-text><way-text class="v" text="${a(el,'value')}" size="18" w="88" color="#a4a4aa"></way-text>`);
define('way-distribution',`<style>
:host{display:flex;box-sizing:border-box;width:874px;height:437px;background:#fff;box-shadow:0 2px 8px rgba(0,0,0,.035);padding:20.5px 35px 0 26.5px;margin-left:17px}
.l{display:flex;flex-direction:column;gap:34.4px;width:367.5px;margin-left:auto;padding-top:65px}
</style><way-donut></way-donut><div class="l">
<way-legend-row c="#55d8fe" label="Sharp turns" w="112.5" value="4260 Sales"></way-legend-row>
<way-legend-row c="#ff8373" label="Sudden lane changes" w="204.5" value="3970 Sales"></way-legend-row>
<way-legend-row c="#ffda83" label="Hard accelerations" w="179.5" value="3454 Sales"></way-legend-row>
<way-legend-row c="#a3a0fb" label="Hard braking" w="125" value="2390 Sales"></way-legend-row></div>`);

const BARS=[[165,204,195],[207,246,150],[249,276,205],[280,318,150],[321,360,105],[363,402,195],[405,441,174],[446,483,126],[488,525,174],[529,567,228],[571,609,195],[612,651,150],[654,681,205]];
define('way-stat',el=>`<style>
:host{display:flex;justify-content:space-between;align-items:flex-end;box-sizing:border-box;width:882px;height:204px;background:#fff;box-shadow:0 4px 10px rgba(0,0,0,.04);padding:0 31px 30px 31px}
.b{display:flex;flex-direction:column;height:174px}
.b>way-text:first-child{margin-top:30.5px}
.v{margin-top:${48.5+ +a(el,'dy','0')}px}
.p{display:flex;margin-top:auto;align-items:center;height:30px;margin-bottom:-3.5px}
.p svg{display:block;margin:-1px 7px 0 -.5px}
</style><div class="b"><way-text text="${a(el,'label')}" size="20.8" w="${a(el,'lw')}" color="#a4a2b3"></way-text>
<way-text class="v" text="${a(el,'value')}" size="35.4" weight="700" w="${a(el,'vw')}" color="#4d4f5c"></way-text>
<div class="p"><svg width="11.5" height="15" viewBox="0 0 11.5 15"><path ${a(el,'dir')==='up'?'':'transform="rotate(180 5.75 7.5)"'} d="M5.75 0 11.5 5.9H7.3V15H4.2V5.9H0z" fill="${a(el,'c')}"/></svg><way-text text="13.8%" size="15.3" weight="700" w="46.5" color="${a(el,'c')}"></way-text></div></div>
<svg width="172" height="62" viewBox="0 0 172 62"><defs><linearGradient id="g" gradientUnits="userSpaceOnUse" x1="0" y1="0" x2="0" y2="62"><stop stop-color="${a(el,'g1')}"/><stop offset="1" stop-color="${a(el,'g2')}"/></linearGradient></defs>${BARS.map(b=>`<rect x="${((b[0]-165)/3).toFixed(2)}" y="${((b[2]-104)/3).toFixed(2)}" width="${((b[1]-b[0])/3-.3).toFixed(2)}" height="${((290-b[2])/3).toFixed(2)}" fill="url(#g)"/>`).join('')}</svg>`);

define('way-dashboard',`<style>
:host{display:flex;width:2452px;height:1548px;background:linear-gradient(#fff 1470px,#f3f3f3 1548px)}
.left{display:flex;flex-direction:column;padding:160px 0 0 114.3px;width:820.5px}
.left .t{padding-left:.5px;height:108px;box-sizing:border-box}
.right{display:flex;flex-direction:column;padding:231px 0 0 0;margin-left:115.3px;width:891px}
.right .t{height:36px;padding-left:16.5px}
.stats{display:flex;flex-direction:column;gap:71.7px}
</style><way-sidebar></way-sidebar>
<div class="left"><div class="t"><way-text text="TRIP SUMMARY" size="56.5" w="391"></way-text></div><way-map></way-map></div>
<div class="right"><div class="t"><way-text text="Maneuver distributiion" size="25" w="262.5" color="#4d4f5c"></way-text></div>
<way-distribution></way-distribution>
<div class="stats">
<way-stat label="Good Maneuvers" lw="161" value="2453" vw="81.5" dir="up" c="#3cc480" g1="#a3a0fb" g2="#d2d0fe" dy="2"></way-stat>
<way-stat label="Poor Maneuvers" lw="155" value="390" vw="61.5" dir="down" c="#3cc480" g1="#5ee2a0" g2="#b0f1d0"></way-stat>
<way-stat label="Total Distance" lw="134" value="246K" vw="85.5" dir="down" c="#ff4141" g1="#54d8ff" g2="#abecff"></way-stat>
</div></div>`);

define('way-desktop',`<style>
:host{display:flex;flex-direction:column;width:2590px;height:1636px;background:linear-gradient(90deg,#43283a,#2d2c46) top/100% 3px no-repeat,#0b0b10}
.row{display:flex;margin-top:4px;height:1622px;background:linear-gradient(#e2e2e2,#d8d8d8 70px,#555 70px,#555 73px,#cfd0d0 74px,#bfc0c0 1000px,#8f8f8f 1250px,#b5b5b5 1400px,#555)}
.win{width:2580px;height:1622px;margin-left:4px;display:flex;flex-direction:column;border-radius:10px 10px 8px 8px;overflow:hidden;background:#000}
.body{display:flex;padding:0 64px}
footer{height:10px;background:linear-gradient(#555,#1c1c1e 3px,#141416)}
</style><div class="row"><div class="win"><way-titlebar></way-titlebar><div class="body"><way-dashboard></way-dashboard></div></div></div><footer></footer>`);
</script>
</body>
</html>
